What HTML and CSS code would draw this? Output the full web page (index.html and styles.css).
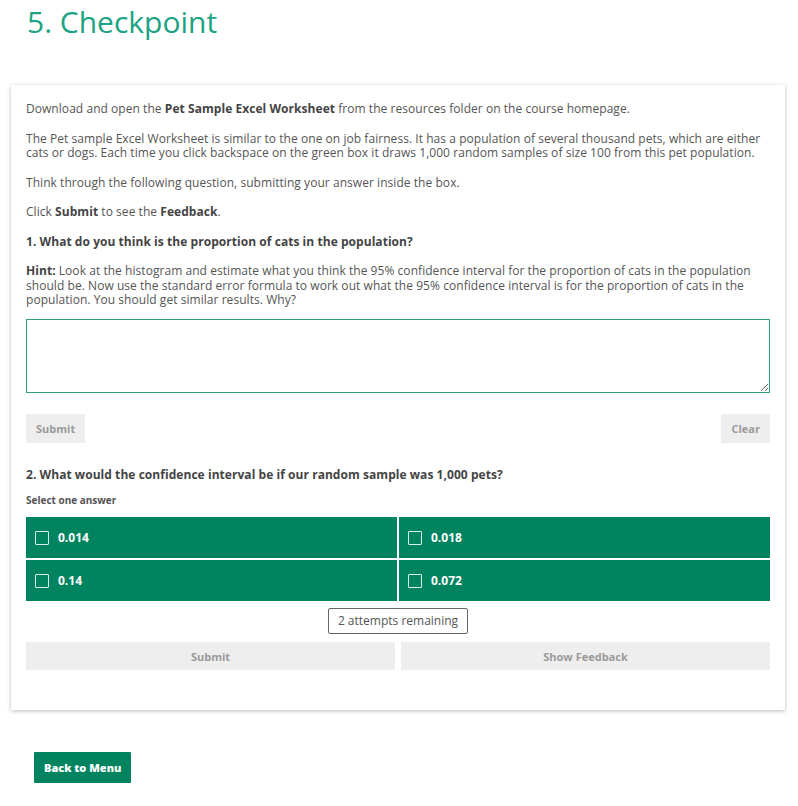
FILE: index.html
```html
<!DOCTYPE html>
<html lang="en">
<head>
<meta charset="utf-8">
<title>5. Checkpoint</title>
<link rel="stylesheet" href="styles.css">
</head>
<body>
<h1 class="title">5. Checkpoint</h1>
<div class="card">
  <p class="text">Download and open the <b>Pet Sample Excel Worksheet</b> from the resources folder on the course homepage.</p>
  <p class="text">The Pet sample Excel Worksheet is similar to the one on job fairness. It has a population of several thousand pets, which are either cats or dogs. Each time you click backspace on the green box it draws 1,000 random samples of size 100 from this pet population.</p>
  <p class="text">Think through the following question, submitting your answer inside the box.</p>
  <p class="text">Click <b>Submit</b> to see the <b>Feedback</b>.</p>
  <p class="text question">1. What do you think is the proportion of cats in the population?</p>
  <p class="text hint"><b>Hint:</b> Look at the histogram and estimate what you think the 95% confidence interval for the proportion of cats in the population should be. Now use the standard error formula to work out what the 95% confidence interval is for the proportion of cats in the population. You should get similar results. Why?</p>
  <textarea class="answer"></textarea>
  <div class="row-buttons">
    <button class="btn-grey">Submit</button>
    <button class="btn-grey">Clear</button>
  </div>
  <p class="text question q2">2. What would the confidence interval be if our random sample was 1,000 pets?</p>
  <p class="select">Select one answer</p>
  <div class="options">
    <div class="option"><span class="box"></span>0.014</div>
    <div class="option"><span class="box"></span>0.018</div>
    <div class="option"><span class="box"></span>0.14</div>
    <div class="option"><span class="box"></span>0.072</div>
  </div>
  <div class="attempts-row"><span class="attempts">2 attempts remaining</span></div>
  <div class="bottom-buttons">
    <button class="btn-grey wide">Submit</button>
    <button class="btn-grey wide">Show Feedback</button>
  </div>
</div>
<div class="footer">
  <button class="btn-green">Back to Menu</button>
</div>
</body>
</html>
```
FILE: styles.css
```css
html, body {
  margin: 0;
  padding: 0;
  background: #fff;
}
body {
  font-family: "Open Sans", "Liberation Sans", sans-serif;
  color: #555;
}
.title {
  margin: 0;
  padding: 3px 0 0 27px;
  font-size: 30px;
  line-height: 38px;
  font-weight: 400;
  color: #1ba383;
}
.card {
  margin: 44px 13px 0 11px;
  background: #fff;
  box-shadow: 0 1px 4px rgba(0, 0, 0, 0.28);
  padding: 17px 15px 40px 15px;
}
.text {
  margin: 0 0 15px 0;
  font-size: 12px;
  line-height: 14.5px;
  letter-spacing: 0.05px;
  color: #555;
}
.text b {
  color: #444;
  font-weight: 700;
}
.question {
  font-weight: 700;
  color: #444;
}
.hint {
  margin-bottom: 11px;
}
.answer {
  display: block;
  box-sizing: border-box;
  width: 100%;
  height: 74px;
  margin: 0;
  border: 1px solid #2e9e7a;
  border-radius: 0;
  font-family: inherit;
  resize: vertical;
  outline: none;
}
.row-buttons {
  display: flex;
  justify-content: space-between;
  margin-top: 21px;
}
.btn-grey {
  border: none;
  background: #eeeeee;
  color: #9a9a9a;
  font-family: "Open Sans", "Liberation Sans", sans-serif;
  font-weight: 700;
  font-size: 11px;
  height: 29px;
  padding: 0 10px;
  cursor: default;
}
.q2 {
  margin-top: 25px;
  margin-bottom: 11px;
}
.select {
  margin: 0 0 10px 0;
  font-size: 10px;
  line-height: 14px;
  font-weight: 700;
  color: #555;
}
.options {
  display: grid;
  grid-template-columns: 1fr 1fr;
  gap: 2px;
}
.option {
  display: flex;
  align-items: center;
  height: 41px;
  background: #00845f;
  color: #fff;
  font-weight: 700;
  font-size: 12px;
  padding-left: 9px;
}
.box {
  display: inline-block;
  width: 12px;
  height: 12px;
  border: 1.5px solid #d8efe6;
  border-radius: 1px;
  margin-right: 9px;
}
.attempts-row {
  display: flex;
  justify-content: center;
  margin-top: 7px;
}
.attempts {
  display: inline-block;
  border: 1px solid #666;
  border-radius: 2px;
  font-size: 12px;
  line-height: 24px;
  padding: 0 9px;
  color: #555;
}
.bottom-buttons {
  display: grid;
  grid-template-columns: 1fr 1fr;
  gap: 6px;
  margin-top: 8px;
}
.btn-grey.wide {
  height: 28px;
}
.footer {
  padding: 42px 0 0 34px;
}
.btn-green {
  border: none;
  background: #00845f;
  color: #fff;
  font-family: "Open Sans", "Liberation Sans", sans-serif;
  font-weight: 800;
  font-size: 11px;
  height: 31px;
  padding: 0 10px;
  border-radius: 1px;
}
```
